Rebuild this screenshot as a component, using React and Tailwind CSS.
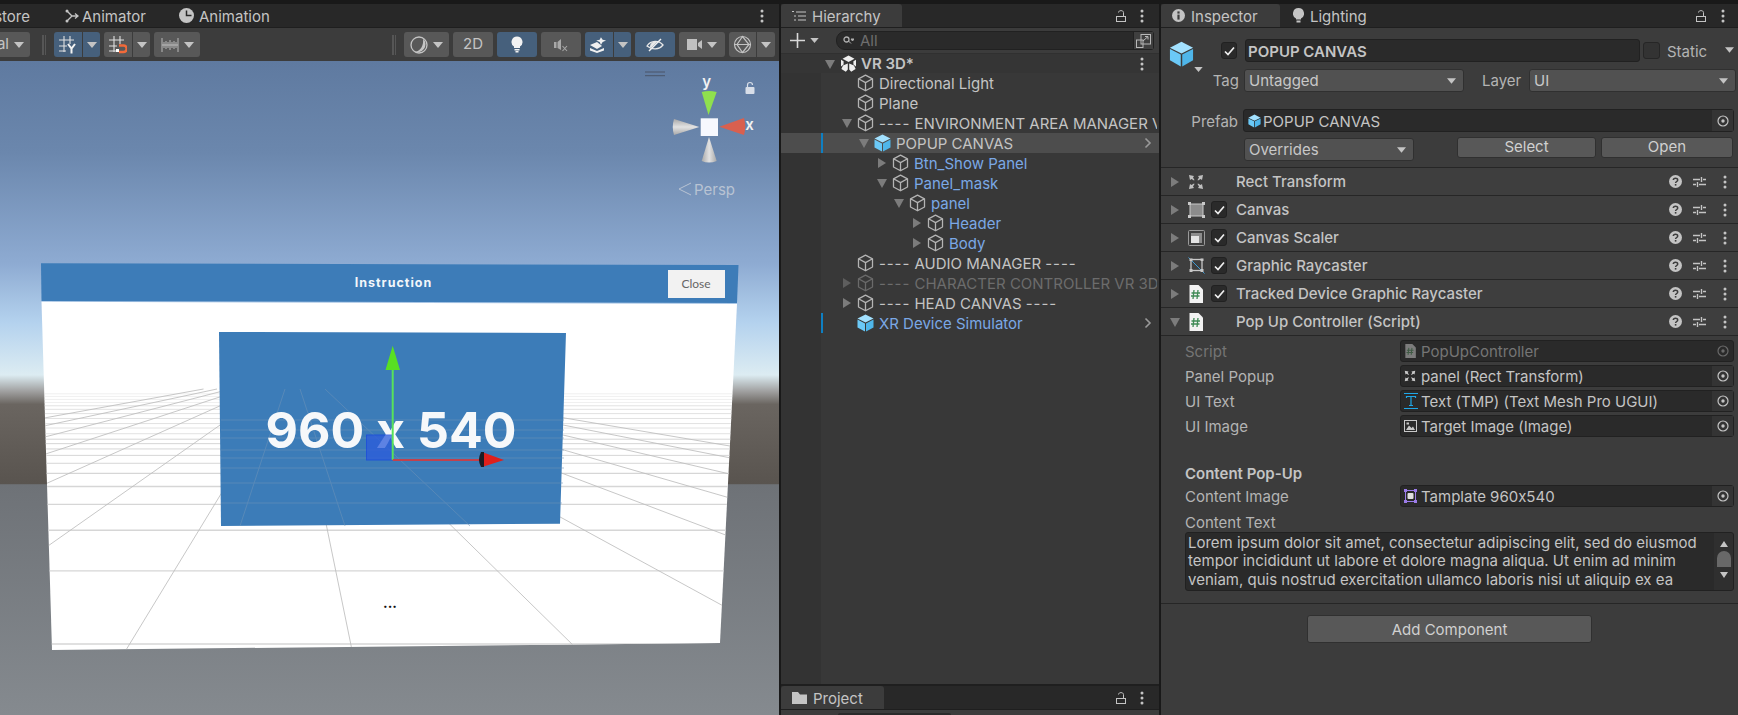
import React from 'react'

const ink = '#c4c4c4'

function Kebab() {
  return (
    <svg width="4" height="14" viewBox="0 0 4 14" className="shrink-0">
      <circle cx="2" cy="2" r="1.5" fill={ink} />
      <circle cx="2" cy="7" r="1.5" fill={ink} />
      <circle cx="2" cy="12" r="1.5" fill={ink} />
    </svg>
  )
}

function Lock() {
  return (
    <svg width="12" height="14" viewBox="0 0 12 14" className="shrink-0">
      <rect x="1.5" y="7.5" width="9" height="5" fill="none" stroke={ink} />
      <path d="M8.5 7V3.5C8.5 1 3.5 1 3.5 3.5" fill="none" stroke={ink} />
    </svg>
  )
}

function TriDown({ color = ink, w = 10, h = 6 }) {
  return (
    <svg width={w} height={h} viewBox="0 0 10 6" className="shrink-0">
      <path d="M0 0H10L5 6Z" fill={color} />
    </svg>
  )
}

function Arrow({ open, color = '#7c7c7c' }) {
  return (
    <svg width="10" height="10" viewBox="0 0 10 10" className="shrink-0">
      {open ? <path d="M0 1H10L5 10Z" fill={color} /> : <path d="M1 0L9 5L1 10Z" fill={color} />}
    </svg>
  )
}

function CubeLine({ dim }) {
  const c = dim ? '#6a6a6a' : '#b4b4b4'
  return (
    <svg width="17" height="18" viewBox="0 0 17 18" className="shrink-0">
      <path d="M8.5 1.2L15.5 4.8V13L8.5 16.8L1.5 13V4.8Z M1.5 4.8L8.5 8.6L15.5 4.8 M8.5 8.6V16.8" fill="none" stroke={c} strokeWidth="1.3" strokeLinejoin="round" />
    </svg>
  )
}

function CubeBlue({ w = 17, h = 18 }) {
  return (
    <svg width={w} height={h} viewBox="0 0 17 18" className="shrink-0">
      <path d="M8.5 0.5L16.5 4.6L8.5 8.6L0.5 4.6Z" fill="#a2e1ff" />
      <path d="M0.5 5.6L8 9.4V17.6L0.5 13.4Z" fill="#6bc9f7" />
      <path d="M16.5 5.6L9 9.4V17.6L16.5 13.4Z" fill="#4fb6ea" />
    </svg>
  )
}

function UnityMark() {
  return (
    <svg width="17" height="18" viewBox="0 0 17 18" className="shrink-0">
      <path d="M8.5 0.5L14.5 3.8L8.5 7L2.5 3.8Z M16 4.8V11.6L13.4 9.4V6.2Z M1 4.8L3.6 6.2V9.4L1 11.6Z M3 10.4L7.8 8.4V14.6L5.8 16.8L1.4 14Z M14 10.4L9.2 8.4V14.6L11.2 16.8L15.6 14Z" fill="#efefef" />
    </svg>
  )
}

function Chevron() {
  return (
    <svg width="8" height="12" viewBox="0 0 8 12" className="shrink-0">
      <path d="M1.5 1.5L6 6L1.5 10.5" fill="none" stroke="#9a9a9a" strokeWidth="1.6" />
    </svg>
  )
}

function Target({ dim }) {
  const c = dim ? '#6a6a6a' : '#c4c4c4'
  return (
    <svg width="12" height="12" viewBox="0 0 12 12" className="shrink-0">
      <circle cx="6" cy="6" r="5" fill="none" stroke={c} strokeWidth="1.2" />
      <circle cx="6" cy="6" r="1.7" fill={c} />
    </svg>
  )
}

function Check() {
  return (
    <div className="flex h-[17px] w-4 shrink-0 items-center justify-center rounded-[3px] border border-[#212121] bg-[#2a2a2a]">
      <svg width="11" height="10" viewBox="0 0 11 10">
        <path d="M1 5.5L4 8.5L10 1.5" fill="none" stroke="#eeeeee" strokeWidth="1.7" />
      </svg>
    </div>
  )
}

function Tab({ icon, label, active, w }) {
  return (
    <div className={`flex h-[23px] items-center rounded-t-[3px] pl-[11px] ${w} ${active ? 'bg-[#3c3c3c]' : ''}`}>
      {icon}
      <span className="ml-[6px] pt-[3px] text-[15px] text-[#c4c4c4]">{label}</span>
    </div>
  )
}

function ToolBtn({ w, blue, children, className = '' }) {
  return (
    <div className={`flex h-[25px] shrink-0 items-center justify-center ${w} ${blue ? 'bg-[#46607c]' : 'bg-[#585858]'} ${className}`}>
      {children}
    </div>
  )
}

function Split({ w1, w2, blue, children }) {
  return (
    <div className="flex shrink-0 gap-px">
      <ToolBtn w={w1} blue={blue} className="rounded-l-[3px]">{children}</ToolBtn>
      <ToolBtn w={w2} blue={blue} className="rounded-r-[3px]"><TriDown /></ToolBtn>
    </div>
  )
}

function Grip() {
  return (
    <div className="flex shrink-0 gap-px">
      <div className="h-[20px] w-[1.5px] bg-[#565656]" />
      <div className="h-[20px] w-[1.5px] bg-[#565656]" />
    </div>
  )
}

function GridIcon({ letter }) {
  return (
    <svg width="18" height="18" viewBox="0 0 18 18">
      <path d="M5 0V16 M11 0V8 M0 4H15 M0 10H8 M0 15H7" fill="none" stroke="#e0e0e0" strokeWidth="1.1" />
      {letter ? (
        <path d="M9 8L12.5 12.5L16 8 M12.5 12.5V17.5" fill="none" stroke="#f2f2f2" strokeWidth="2" />
      ) : (
        <g>
          <rect x="7" y="13" width="3" height="3" fill="#ffffff" />
          <path d="M10 9.5H14.5A3.2 3.2 0 0 1 14.5 16H10" fill="none" stroke="#f26a3a" strokeWidth="2.6" />
        </g>
      )}
    </svg>
  )
}

function SceneTools() {
  return (
    <div className="flex h-[33px] shrink-0 items-center bg-[#3c3c3c]">
      <ToolBtn w="w-[30px]" className="rounded-r-[3px] !justify-start gap-[5px]">
        <span className="w-[9px] overflow-hidden whitespace-nowrap text-[15px] text-[#c4c4c4] [direction:rtl]">al</span>
        <TriDown />
      </ToolBtn>
      <div className="ml-[12px]"><Grip /></div>
      <div className="ml-[8px]">
        <Split w1="w-[28px]" w2="w-[17px]" blue><GridIcon letter /></Split>
      </div>
      <div className="ml-[4px]">
        <Split w1="w-[28px]" w2="w-[17px]"><GridIcon /></Split>
      </div>
      <ToolBtn w="w-[46px]" className="ml-[4px] rounded-[3px] gap-[5px]">
        <svg width="18" height="14" viewBox="0 0 18 14">
          <path d="M1 0V14 M17 0V14 M1 7H17 M5 3V11 M9 2V12 M13 3V11 M7 4V10 M11 4V10 M15 4V10 M3 4V10" stroke="#c4c4c4" strokeWidth="0.9" fill="none" />
        </svg>
        <TriDown />
      </ToolBtn>
      <div className="ml-[192px]"><Grip /></div>
      <ToolBtn w="w-[45px]" className="ml-[8px] rounded-[3px] gap-[5px]">
        <svg width="18" height="18" viewBox="0 0 18 18">
          <circle cx="9" cy="9" r="8" fill="none" stroke="#c4c4c4" strokeWidth="1.3" />
          <path d="M13 2.5A8 8 0 0 1 4 15.5C9 16 14 11 13 2.5Z" fill="#c4c4c4" />
        </svg>
        <TriDown />
      </ToolBtn>
      <ToolBtn w="w-[40px]" className="ml-[4px] rounded-[3px]">
        <span className="text-[15px] text-[#c4c4c4]">2D</span>
      </ToolBtn>
      <ToolBtn w="w-[40px]" blue className="ml-[4px] rounded-[3px]">
        <svg width="12" height="17" viewBox="0 0 12 17">
          <path d="M6 0.5A5.5 5.5 0 0 1 9 10.6V12H3V10.6A5.5 5.5 0 0 1 6 0.5Z" fill="#f2f2f2" />
          <rect x="3.5" y="13" width="5" height="1.5" fill="#f2f2f2" />
          <rect x="4.5" y="15" width="3" height="1.5" fill="#f2f2f2" />
        </svg>
      </ToolBtn>
      <ToolBtn w="w-[40px]" className="ml-[4px] rounded-[3px]">
        <svg width="14" height="14" viewBox="0 0 14 14">
          <path d="M0 4H2.5V10H0Z M3.5 4L7 1V12L3.5 10Z" fill="#a8a8a8" />
          <path d="M8.5 8L13 13 M13 8L8.5 13" stroke="#a8a8a8" strokeWidth="1.1" />
        </svg>
      </ToolBtn>
      <div className="ml-[4px]">
        <Split w1="w-[28px]" w2="w-[17px]" blue>
          <svg width="18" height="16" viewBox="0 0 18 16">
            <path d="M7 2L9 5L13 6L9 7.5L7 11L5.5 7.5L1.5 6L5.5 5Z" fill="#f0f0f0" transform="translate(5 -1.5) scale(.85)" />
            <path d="M0 8L7 5L12 9L7 12Z" fill="#f0f0f0" />
            <path d="M0 11L7 14L14 11V13.5L7 16L0 13.5Z" fill="#f0f0f0" />
          </svg>
        </Split>
      </div>
      <ToolBtn w="w-[40px]" blue className="ml-[4px] rounded-[3px]">
        <svg width="18" height="14" viewBox="0 0 18 14">
          <path d="M1 8C5 2 13 2 17 7C13 12 6 12 1 8Z" fill="none" stroke="#e8e8e8" strokeWidth="1.3" />
          <path d="M4 9A5 5 0 0 1 11 4L5 10Z" fill="#e8e8e8" />
          <path d="M3 13L15 1" stroke="#f2f2f2" strokeWidth="1.5" />
        </svg>
      </ToolBtn>
      <ToolBtn w="w-[46px]" className="ml-[4px] rounded-[3px] gap-[5px]">
        <svg width="15" height="11" viewBox="0 0 15 11">
          <rect x="0" y="0" width="10" height="11" fill="#c0c0c0" />
          <path d="M11 4L15 1V10L11 7Z" fill="#c0c0c0" />
        </svg>
        <TriDown />
      </ToolBtn>
      <div className="ml-[4px]">
        <Split w1="w-[27px]" w2="w-[18px]">
          <svg width="19" height="19" viewBox="0 0 19 19">
            <circle cx="9.5" cy="9.5" r="8" fill="none" stroke="#c4c4c4" strokeWidth="1.2" />
            <path d="M9.5 1.5L4 9.5L9.5 17.5L16 9.5Z M1.5 9.5H17.5" fill="none" stroke="#c4c4c4" strokeWidth="1.2" />
          </svg>
        </Split>
      </div>
    </div>
  )
}

const gridRows = [2.5, 3.5, 4.5, 5.5, 6.5, 7.5, 8.5, 9.5, 10.5, 11.5, 12.5, 14, 16, 18, 21, 25, 30, 36, 44, 56, 76, 110]
const gridCols = [-1230, -1005, -780, -553, -326, -100, 126, 352, 578, 804, 1030, 1256, 1482, 1708, 1934]

function SceneView() {
  return (
    <div className="min-h-0 flex-1 overflow-hidden">
      <svg width="779" height="654" viewBox="0 61 779 654" className="block">
        <defs>
          <linearGradient id="sky" x1="0" y1="61" x2="0" y2="715" gradientUnits="userSpaceOnUse">
            <stop offset="0" stopColor="#5f7aa0" />
            <stop offset="0.14" stopColor="#6b87ad" />
            <stop offset="0.31" stopColor="#8eabd2" />
            <stop offset="0.4" stopColor="#b4d2ee" />
            <stop offset="0.48" stopColor="#dcecf2" />
            <stop offset="0.505" stopColor="#a0a0a0" />
            <stop offset="0.525" stopColor="#6a6560" />
            <stop offset="0.646" stopColor="#59544f" />
            <stop offset="0.648" stopColor="#6e7277" />
            <stop offset="1" stopColor="#858a8f" />
          </linearGradient>
          <linearGradient id="coneH" x1="0" y1="0" x2="0" y2="1">
            <stop offset="0" stopColor="#a8a8a8" />
            <stop offset="0.5" stopColor="#e2e2e2" />
            <stop offset="1" stopColor="#a8a8a8" />
          </linearGradient>
          <linearGradient id="coneV" x1="0" y1="0" x2="1" y2="0">
            <stop offset="0" stopColor="#a8a8a8" />
            <stop offset="0.5" stopColor="#e2e2e2" />
            <stop offset="1" stopColor="#a8a8a8" />
          </linearGradient>
          <clipPath id="panel">
            <path d="M41.5 301.7L737 304L720 643L52 650Z" />
          </clipPath>
        </defs>
        <rect x="0" y="61" width="779" height="654" fill="url(#sky)" />

        <path d="M41.5 301.7L737 304L720 643L52 650Z" fill="#ffffff" />
        <g clipPath="url(#panel)" fill="none">
          {gridRows.map((n) => (
            <path key={n} d={`M0 ${388 + 640 / n}H779`} stroke="#d6d6d6" strokeWidth={n < 8 ? 1.4 : 1} opacity={n < 14 ? 1 : n < 40 ? 0.7 : 0.4} />
          ))}
          {gridCols.map((x) => (
            <path key={x} d={`M${295 + (x - 295) * 0.06} 389L${x} 650`} stroke="#bdbdbd" strokeWidth="1" opacity="0.85" />
          ))}
        </g>
        <path d="M41 263.3L738.5 265L737 303L41.5 301Z" fill="#3d7cb8" />
        <rect x="668" y="270" width="57" height="28" fill="#f2f2f2" />
        <text x="696" y="288" textAnchor="middle" fontFamily="Lato, sans-serif" fontSize="12" fill="#666666">Close</text>
        <text x="393.5" y="287" textAnchor="middle" fontFamily="Inter, sans-serif" fontSize="12.5" fontWeight="700" letterSpacing="1" fill="#f2f6fa">Instruction</text>
        <path d="M219 332L566 333L560 523.7L221 526Z" fill="#3c7cb8" />
        <g clipPath="url(#panel)" stroke="#6e93b8" fill="none" opacity="0.55">
          <path d="M221 503H562 M221 483H563 M221 468H564 M221 458H564 M221 450H564 M221 438H564 M221 430H564 M221 420H564" />
          <path d="M240 526L285 389 M345 526L300 389 M470 526L325 389" />
        </g>
        <text x="391" y="448" textAnchor="middle" fontFamily="Inter, sans-serif" fontSize="50" fontWeight="700" textLength="251" lengthAdjust="spacingAndGlyphs" fill="#f6f8fa">960 x 540</text>
        <text x="390" y="608" textAnchor="middle" fontFamily="Inter, sans-serif" fontSize="14" fontWeight="700" fill="#111111">...</text>

        {/* move tool handle */}
        <rect x="366.5" y="435" width="26" height="25" fill="#2b5bdc" opacity="0.75" stroke="#1746e0" />
        <path d="M392.7 460V370" stroke="#58e25a" strokeWidth="2" />
        <path d="M392.7 345.7L400 370H385.5Z" fill="#58e022" />
        <path d="M392.7 460H482" stroke="#c2414d" strokeWidth="2" />
        <path d="M482 452L504 460L482 467Z" fill="#e0201c" />
        <path d="M481 452Q477 460 481 467L484 467V452Z" fill="#1c1c24" />

        {/* scene orientation gizmo */}
        <path d="M645 72H665 M645 75.7H665" stroke="#4a5568" strokeWidth="1" />
        <rect x="700.7" y="118.3" width="17.3" height="17.7" fill="#f6f8fe" />
        <path d="M708.5 115L701.7 92Q709 90 716.7 92Z" fill="#8fe04e" />
        <path d="M709 137L701.7 161Q709 164 716.7 161Z" fill="url(#coneV)" />
        <path d="M699.3 127L674 119Q671.5 127 674 135Z" fill="url(#coneH)" />
        <path d="M719.3 126.7L744 118Q746.5 126.5 744 135Z" fill="#d9604f" />
        <text x="706.7" y="86.5" textAnchor="middle" fontFamily="Inter, sans-serif" fontSize="15" fontWeight="600" fill="#f2f2f2">y</text>
        <text x="749.5" y="130" textAnchor="middle" fontFamily="Inter, sans-serif" fontSize="15" fontWeight="600" fill="#f2f2f2">x</text>
        <rect x="745.5" y="87" width="9" height="7" rx="1" fill="#d8dee8" />
        <path d="M747.5 87V85A2.5 2.5 0 0 1 752.5 85" fill="none" stroke="#d8dee8" strokeWidth="1.2" />
        <path d="M691 183L679 189L691 195" fill="none" stroke="#b8c3d3" strokeWidth="1" />
        <text x="694" y="195" fontFamily="Inter, sans-serif" fontSize="15" fill="#b8c3d3">Persp</text>
      </svg>
    </div>
  )
}

function SceneColumn() {
  return (
    <div className="flex w-[779px] shrink-0 flex-col pt-[4px]">
      <div className="flex h-[23px] shrink-0 items-center bg-[#282828] text-[15px] text-[#c4c4c4]">
        <span className="w-[30px] overflow-hidden whitespace-nowrap pt-[3px] [direction:rtl]">store</span>
        <svg width="14" height="14" viewBox="0 0 14 14" className="ml-[35px]">
          <circle cx="2" cy="2" r="1.5" fill={ink} />
          <circle cx="2" cy="12" r="1.5" fill={ink} />
          <path d="M2 2L7 7H12 M2 12L7 7 M10 4.5L13 7L10 9.5" fill="none" stroke={ink} strokeWidth="1.3" />
        </svg>
        <span className="ml-[3px] w-[64px] whitespace-nowrap pt-[3px]">Animator</span>
        <svg width="15" height="15" viewBox="0 0 15 15" className="ml-[33px]">
          <circle cx="7.5" cy="7.5" r="7.5" fill={ink} />
          <path d="M7.5 2.5V7.5H12.5" fill="none" stroke="#282828" strokeWidth="1.5" />
        </svg>
        <span className="ml-[5px] pt-[3px]">Animation</span>
        <div className="ml-auto mr-[15px]"><Kebab /></div>
      </div>
      <div className="h-px shrink-0 bg-[#1f1f1f]" />
      <SceneTools />
      <SceneView />
    </div>
  )
}

const depthPad = ['pl-[19px]', 'pl-[36px]', 'pl-[54px]', 'pl-[71px]', 'pl-[89px]']

const rows = [
  { name: 'Directional Light', depth: 0 },
  { name: 'Plane', depth: 0 },
  { name: '---- ENVIRONMENT AREA MANAGER VR', depth: 0, arrow: 'open' },
  { name: 'POPUP CANVAS', depth: 1, arrow: 'open', selected: true, root: true, mark: true, tone: 'plain' },
  { name: 'Btn_Show Panel', depth: 2, arrow: 'closed', tone: 'blue' },
  { name: 'Panel_mask', depth: 2, arrow: 'open', tone: 'blue' },
  { name: 'panel', depth: 3, arrow: 'open', tone: 'blue' },
  { name: 'Header', depth: 4, arrow: 'closed', tone: 'blue' },
  { name: 'Body', depth: 4, arrow: 'closed', tone: 'blue' },
  { name: '---- AUDIO MANAGER ----', depth: 0 },
  { name: '---- CHARACTER CONTROLLER VR 3D', depth: 0, arrow: 'closed', tone: 'dim' },
  { name: '---- HEAD CANVAS ----', depth: 0, arrow: 'closed' },
  { name: 'XR Device Simulator', depth: 0, root: true, mark: true, tone: 'blue' },
]

function HierarchyRow({ row }) {
  const dim = row.tone === 'dim'
  const tone = row.tone === 'blue' ? 'text-[#7ba8e6]' : dim ? 'text-[#6c6c6c]' : 'text-[#c4c4c4]'
  return (
    <div className={`flex h-5 shrink-0 items-center ${row.selected ? 'bg-[#4d4d4d]' : ''}`}>
      <div className={`h-full w-10 shrink-0 ${row.selected ? '' : 'bg-[#333333]'}`} />
      <div className={`h-full w-[2px] shrink-0 ${row.mark ? 'bg-[#0e7fc2]' : ''}`} />
      <div className={`flex min-w-0 flex-1 items-center overflow-hidden ${depthPad[row.depth]}`}>
        <div className="flex w-[15px] shrink-0">
          {row.arrow && <Arrow open={row.arrow === 'open'} color={dim ? '#5e5e5e' : '#7c7c7c'} />}
        </div>
        {row.root ? <CubeBlue /> : <CubeLine dim={dim} />}
        <span className={`ml-[5px] whitespace-nowrap pt-[2px] text-[15px] ${tone}`}>
          {row.name.split(/(----)/).map((part, i) => (
            <span key={i} className={part === '----' ? 'tracking-[0.9px]' : ''}>{part}</span>
          ))}
        </span>
      </div>
      {row.root ? <div className="mr-[7px] shrink-0 pl-1"><Chevron /></div> : <div className="w-[2px] shrink-0" />}
    </div>
  )
}

function HierarchyColumn() {
  return (
    <div className="ml-[2px] flex w-[378px] shrink-0 flex-col pt-[4px]">
      <div className="flex h-[23px] shrink-0 items-center bg-[#282828]">
        <Tab
          w="w-[121px]"
          active
          icon={
            <svg width="14" height="10" viewBox="0 0 14 10">
              <path d="M0 0.5H2 M4 1H14 M2 5H4 M6 5H14 M2 9H4 M6 9H14" fill="none" stroke={ink} strokeWidth="1.2" />
            </svg>
          }
          label="Hierarchy"
        />
        <div className="ml-auto"><Lock /></div>
        <div className="ml-[13px] mr-[15px]"><Kebab /></div>
      </div>
      <div className="h-px shrink-0 bg-[#1f1f1f]" />
      <div className="flex h-[25px] shrink-0 items-center bg-[#3c3c3c] pl-[9px]">
        <svg width="15" height="15" viewBox="0 0 15 15">
          <path d="M7.5 0V15 M0 7.5H15" stroke="#d8d8d8" strokeWidth="1.6" />
        </svg>
        <div className="ml-[5px]"><TriDown w={9} h={5} /></div>
        <div className="ml-[17px] flex h-[19px] w-[318px] items-center rounded-[9px] rounded-r-[3px] border border-[#212121] bg-[#2a2a2a] pl-[6px]">
          <svg width="11" height="9" viewBox="0 0 11 9">
            <circle cx="3.5" cy="3.5" r="2.5" fill="none" stroke="#b0b0b0" strokeWidth="1.3" />
            <path d="M5.5 5L8 7.5 M8 3H11L9.5 5Z" stroke="#b0b0b0" fill="#b0b0b0" strokeWidth="1" />
          </svg>
          <span className="ml-[6px] text-[15px] leading-none text-[#6e6e6e]">All</span>
          <div className="ml-auto flex h-full w-[20px] items-center justify-center border-l border-[#212121] bg-[#3f3f3f]">
            <svg width="15" height="14" viewBox="0 0 15 14">
              <rect x="5" y="0.5" width="9.5" height="9.5" fill="none" stroke="#b8b8b8" />
              <rect x="0.5" y="6" width="6.5" height="7.5" fill="none" stroke="#b8b8b8" />
              <path d="M7 7L12 2.5 M9 2.5H12V5.5" fill="none" stroke="#b8b8b8" />
            </svg>
          </div>
        </div>
      </div>
      <div className="flex h-5 shrink-0 items-center border-t border-[#303030] bg-[#353535] pl-[42px]">
        <div className="ml-[2px] w-[15px]"><Arrow open /></div>
        <UnityMark />
        <span className="ml-[4px] pt-px text-[15px] font-semibold text-[#c4c4c4]">VR 3D*</span>
        <div className="ml-auto mr-[15px]"><Kebab /></div>
      </div>
      <div className="flex min-h-0 flex-1 flex-col bg-[#383838]">
        {rows.map((row) => <HierarchyRow key={row.name} row={row} />)}
        <div className="w-10 flex-1 bg-[#333333]" />
      </div>
      <div className="h-[2px] shrink-0 bg-[#1f1f1f]" />
      <div className="flex h-[23px] shrink-0 items-center bg-[#282828]">
        <Tab
          w="w-[103px]"
          active
          icon={
            <svg width="15" height="12" viewBox="0 0 15 12">
              <path d="M0 0H6L8 2.5H15V12H0Z" fill={ink} />
            </svg>
          }
          label="Project"
        />
        <div className="ml-auto"><Lock /></div>
        <div className="ml-[13px] mr-[15px]"><Kebab /></div>
      </div>
      <div className="h-px shrink-0 bg-[#1f1f1f]" />
      <div className="flex h-[5px] shrink-0 items-end overflow-hidden bg-[#3c3c3c] pl-[57px]">
        <div className="h-[2px] w-[113px] rounded-t-[3px] bg-[#2a2a2a]" />
      </div>
    </div>
  )
}

function Dropdown({ w, label, h = 'h-[23px]' }) {
  return (
    <div className={`flex ${h} ${w} shrink-0 items-center justify-between rounded-[3px] border border-[#303030] bg-[#515151] pl-[4px] pr-[7px]`}>
      <span className="pt-px text-[15px] text-[#c8c8c8]">{label}</span>
      <TriDown w={9} h={6} />
    </div>
  )
}

function Button({ w, h, label, pad = '' }) {
  return (
    <div className={`flex ${h} ${w} ${pad} shrink-0 items-center justify-center rounded-[3px] border border-[#303030] bg-[#585858] text-[15px] text-[#d0d0d0]`}>
      {label}
    </div>
  )
}

function RectIcon() {
  return (
    <svg width="16" height="16" viewBox="0 0 16 16">
      <path d="M1 1L6 2L5 3.5L6.5 6L6 6.5L3.5 5L2 6Z M15 1L10 2L11 3.5L9.5 6L10 6.5L12.5 5L14 6Z M1 15L6 14L5 12.5L6.5 10L6 9.5L3.5 11L2 10Z M15 15L10 14L11 12.5L9.5 10L10 9.5L12.5 11L14 10Z" fill="#c0c0c0" />
    </svg>
  )
}

function CanvasIcon() {
  return (
    <svg width="17" height="16" viewBox="0 0 17 16">
      <rect x="2" y="2" width="13" height="12" fill="#8c8c8c" stroke="#c8c8c8" />
      <path d="M0 0H3V3H0Z M14 0H17V3H14Z M0 13H3V16H0Z M14 13H17V16H14Z" fill="#c8c8c8" />
    </svg>
  )
}

function ScalerIcon() {
  return (
    <svg width="17" height="16" viewBox="0 0 17 16">
      <rect x="0.5" y="0.5" width="16" height="15" rx="1" fill="none" stroke="#9a9a9a" />
      <rect x="3" y="3" width="11" height="10" fill="#8c8c8c" />
      <rect x="3" y="6" width="8" height="7" fill="#e4e4e4" />
    </svg>
  )
}

function RaycastIcon() {
  return (
    <svg width="17" height="17" viewBox="0 0 17 17">
      <path d="M0.5 0.5L16.5 16.5" stroke="#3f9bd4" strokeWidth="1" />
      <rect x="3" y="2.5" width="11" height="11" fill="none" stroke="#c8c8c8" strokeWidth="1.3" />
      <path d="M1.5 1.5H4.5V4H1.5Z M12.5 1.5H15.5V4H12.5Z M1.5 12H4.5V15H1.5Z M12.5 12H15.5V15H12.5Z" fill="#c8c8c8" />
    </svg>
  )
}

function ScriptIcon({ w = 15, h = 18, dim }) {
  return (
    <svg width={w} height={h} viewBox="0 0 15 18">
      <path d="M1.5 0H10.5L15 4.5V18H1.5Z" fill={dim ? '#7c7c7c' : '#f2f2f2'} />
      <path d="M6 5L5 14 M10 5L9 14 M3.5 8H12 M3 11H11.5" fill="none" stroke={dim ? '#3f5a44' : '#3f8a55'} strokeWidth="1.3" />
    </svg>
  )
}

function HeaderTools() {
  return (
    <div className="ml-auto flex items-center pr-[11px]">
      <svg width="13" height="13" viewBox="0 0 13 13">
        <circle cx="6.5" cy="6.5" r="6.5" fill={ink} />
        <path d="M4.3 5C4.4 2.6 8.7 2.6 8.7 5C8.7 6.6 6.6 6.4 6.6 8" fill="none" stroke="#3c3c3c" strokeWidth="1.5" />
        <rect x="5.8" y="9" width="1.6" height="1.6" fill="#3c3c3c" />
      </svg>
      <svg width="13" height="12" viewBox="0 0 13 12" className="ml-[11px]">
        <path d="M0 3.5H7 M10 3.5H13 M0 8.5H3 M6 8.5H13 M8.5 1V6 M4.5 6V11" fill="none" stroke={ink} strokeWidth="1.4" />
      </svg>
      <div className="ml-[17px]"><Kebab /></div>
    </div>
  )
}

function ComponentHeader({ name, icon, check, open }) {
  return (
    <div className="flex h-[28px] shrink-0 items-center border-b border-[#262626] bg-[#3e3e3e] pl-[9px]">
      <div className="w-[18px]"><Arrow open={open} /></div>
      <div className="flex w-[23px] shrink-0 items-center">{icon}</div>
      <div className="flex w-[25px] shrink-0">{check && <Check />}</div>
      <span className="pt-[2px] text-[15px] font-medium text-[#c4c4c4]">{name}</span>
      <HeaderTools />
    </div>
  )
}

function ObjField({ label, icon, value, dim }) {
  return (
    <div className="mb-[3px] flex h-[22px] items-center">
      <span className={`w-[215px] shrink-0 pt-[2px] text-[15px] ${dim ? 'text-[#757575]' : 'text-[#b4b4b4]'}`}>{label}</span>
      <div className="flex h-full min-w-0 flex-1 items-center rounded-[3px] border border-[#212121] bg-[#2a2a2a] pl-[3px]">
        <div className="flex w-[16px] shrink-0 items-center">{icon}</div>
        <span className={`ml-[1px] pt-[2px] text-[15px] ${dim ? 'text-[#757575]' : 'text-[#c4c4c4]'}`}>{value}</span>
        <div className={`ml-auto flex h-full w-[21px] items-center justify-center ${dim ? '' : 'bg-[#343434]'}`}>
          <Target dim={dim} />
        </div>
      </div>
    </div>
  )
}

function InspectorColumn() {
  return (
    <div className="ml-[2px] flex min-w-0 flex-1 flex-col pt-[4px]">
      <div className="flex h-[23px] shrink-0 items-center bg-[#282828]">
        <Tab
          w="w-[119px]"
          active
          icon={
            <svg width="13" height="13" viewBox="0 0 13 13">
              <circle cx="6.5" cy="6.5" r="6.5" fill={ink} />
              <rect x="5.4" y="2.4" width="2.2" height="2.2" fill="#3c3c3c" />
              <rect x="5.4" y="5.6" width="2.2" height="5" fill="#3c3c3c" />
            </svg>
          }
          label="Inspector"
        />
        <Tab
          w="w-[100px]"
          icon={
            <svg width="11" height="15" viewBox="0 0 11 15" className="ml-[2px]">
              <path d="M5.5 0A5.5 5.5 0 0 1 8 10.4V11.5H3V10.4A5.5 5.5 0 0 1 5.5 0Z" fill={ink} />
              <rect x="3.5" y="12.5" width="4" height="2" fill={ink} />
            </svg>
          }
          label="Lighting"
        />
        <div className="ml-auto"><Lock /></div>
        <div className="ml-[14px] mr-[13px]"><Kebab /></div>
      </div>
      <div className="h-px shrink-0 bg-[#1f1f1f]" />

      <div className="flex min-h-0 flex-1 flex-col bg-[#3c3c3c]">
        <div className="flex h-[140px] shrink-0 flex-col border-b border-[#262626] pt-[11px]">
          <div className="flex h-[23px] shrink-0 items-start pl-[8px]">
            <div className="mt-[2px]"><CubeBlue w={25} h={26} /></div>
            <div className="ml-[27px] mt-[3px]"><Check /></div>
            <div className="ml-[8px] flex h-[23px] w-[395px] shrink-0 items-center rounded-[3px] border border-[#212121] bg-[#2a2a2a] pl-[2px] pt-[3px] text-[15px] font-semibold text-[#c4c4c4]">POPUP CANVAS</div>
            <div className="ml-[3px] mt-[3px] h-[17px] w-[17px] shrink-0 rounded-[3px] border border-[#262626] bg-[#333333]" />
            <span className="ml-[7px] mt-[2px] text-[15px] text-[#b4b4b4]">Static</span>
            <div className="ml-[18px] mt-[8px]"><TriDown w={9} h={6} /></div>
          </div>
          <div className="mt-[7px] flex h-[23px] shrink-0 items-center pl-[33px]">
            <div className="-mt-[2px] w-[10px] self-start"><TriDown w={9} h={5} /></div>
            <span className="w-[35px] whitespace-nowrap pt-px text-right text-[15px] text-[#b4b4b4]">Tag</span>
            <div className="ml-[5px]"><Dropdown w="w-[220px]" label="Untagged" /></div>
            <span className="ml-[18px] w-[42px] whitespace-nowrap pt-px text-[15px] text-[#b4b4b4]">Layer</span>
            <div className="ml-[5px]"><Dropdown w="w-[207px]" label="UI" /></div>
          </div>
          <div className="mt-[17px] flex h-[23px] shrink-0 items-center pl-[30px]">
            <span className="w-[47px] whitespace-nowrap pt-[3px] text-right text-[15px] text-[#b4b4b4]">Prefab</span>
            <div className="ml-[5px] flex h-full w-[491px] items-center rounded-[3px] border border-[#212121] bg-[#2a2a2a] pl-[4px]">
              <CubeBlue w={13} h={14} />
              <span className="ml-[2px] pt-[3px] text-[15px] text-[#c4c4c4]">POPUP CANVAS</span>
              <div className="ml-auto flex h-full w-[21px] items-center justify-center bg-[#343434]"><Target /></div>
            </div>
          </div>
          <div className="mt-[5px] flex shrink-0 items-start pl-[83px]">
            <div className="mt-px"><Dropdown w="w-[170px]" label="Overrides" /></div>
            <div className="ml-[43px]"><Button w="w-[139px]" h="h-[21px]" label="Select" /></div>
            <div className="ml-[5px]"><Button w="w-[132px]" h="h-[21px]" label="Open" /></div>
          </div>
        </div>

        <ComponentHeader name="Rect Transform" icon={<RectIcon />} />
        <ComponentHeader name="Canvas" icon={<CanvasIcon />} check />
        <ComponentHeader name="Canvas Scaler" icon={<ScalerIcon />} check />
        <ComponentHeader name="Graphic Raycaster" icon={<RaycastIcon />} check />
        <ComponentHeader name="Tracked Device Graphic Raycaster" icon={<ScriptIcon />} check />
        <ComponentHeader name="Pop Up Controller (Script)" icon={<ScriptIcon />} open />

        <div className="flex shrink-0 flex-col border-b border-[#262626] pb-[12px] pl-[24px] pr-[4px] pt-[4px]">
          <ObjField label="Script" dim value="PopUpController" icon={<ScriptIcon w={12} h={14} dim />} />
          <ObjField label="Panel Popup" value="panel (Rect Transform)" icon={<svg width="12" height="12" viewBox="0 0 16 16"><path d="M1 1L6 2L5 3.5L6.5 6L6 6.5L3.5 5L2 6Z M15 1L10 2L11 3.5L9.5 6L10 6.5L12.5 5L14 6Z M1 15L6 14L5 12.5L6.5 10L6 9.5L3.5 11L2 10Z M15 15L10 14L11 12.5L9.5 10L10 9.5L12.5 11L14 10Z" fill="#c8c8c8" /></svg>} />
          <ObjField label="UI Text" value="Text (TMP) (Text Mesh Pro UGUI)" icon={<svg width="14" height="16" viewBox="0 0 14 16"><path d="M0 0.5H14 M0 15.5H14 M2.5 5V3.5H11.5V5 M7 3.5V12.5 M5 12.5H9" fill="none" stroke="#1fa8e8" strokeWidth="1.2" /></svg>} />
          <ObjField label="UI Image" value="Target Image (Image)" icon={<svg width="13" height="12" viewBox="0 0 13 12"><rect x="0.5" y="0.5" width="12" height="11" fill="none" stroke="#c8c8c8" /><path d="M2 10L5 5.5L7.5 8L9 6.5L11 10Z" fill="#c8c8c8" /><rect x="2.5" y="2.5" width="2.5" height="2" fill="#c8c8c8" /></svg>} />
          <div className="mt-[23px] flex h-5 items-center pt-[2px] text-[15px] font-semibold text-[#c4c4c4]">Content Pop-Up</div>
          <div className="mt-[2px]">
            <ObjField label="Content Image" value="Tamplate 960x540" icon={<svg width="13" height="14" viewBox="0 0 13 14"><rect x="1.5" y="1.5" width="10" height="11" fill="none" stroke="#9b7be8" /><path d="M0 0H3V3H0Z M10 0H13V3H10Z M0 11H3V14H0Z M10 11H13V14H10Z" fill="#9b7be8" /><rect x="3.5" y="4" width="6" height="6" rx="1" fill="#e0e0e0" /></svg>} />
          </div>
          <div className="mt-[2px] flex h-5 items-center pt-[2px] text-[15px] text-[#b4b4b4]">Content Text</div>
          <div className="flex h-[59px] overflow-hidden rounded-[3px] border border-[#212121] bg-[#2a2a2a]">
            <p className="min-w-0 flex-1 whitespace-pre pl-[2px] pt-px text-[15px] leading-[18.4px] text-[#c4c4c4]">
              {'Lorem ipsum dolor sit amet, consectetur adipiscing elit, sed do eiusmod\ntempor incididunt ut labore et dolore magna aliqua. Ut enim ad minim\nveniam, quis nostrud exercitation ullamco laboris nisi ut aliquip ex ea'}
            </p>
            <div className="flex w-[19px] shrink-0 flex-col items-center bg-[#2f2f2f] pt-[8px]">
              <svg width="8" height="6" viewBox="0 0 8 6"><path d="M4 0L8 6H0Z" fill={ink} /></svg>
              <div className="mt-[4px] h-[16px] w-[14px] rounded-t-[7px] bg-[#686868]" />
              <svg width="8" height="6" viewBox="0 0 8 6" className="mt-[5px]"><path d="M0 0H8L4 6Z" fill={ink} /></svg>
            </div>
          </div>
        </div>

        <div className="flex justify-center pt-[11px]">
          <Button w="w-[285px]" h="h-[28px]" pad="pt-[2px]" label="Add Component" />
        </div>
      </div>
    </div>
  )
}

export default function App() {
  return (
    <div className="flex h-[715px] w-[1738px] overflow-hidden bg-[#191919] font-[family-name:Inter,sans-serif] [font-feature-settings:'calt'_0]">
      <SceneColumn />
      <HierarchyColumn />
      <InspectorColumn />
    </div>
  )
}
